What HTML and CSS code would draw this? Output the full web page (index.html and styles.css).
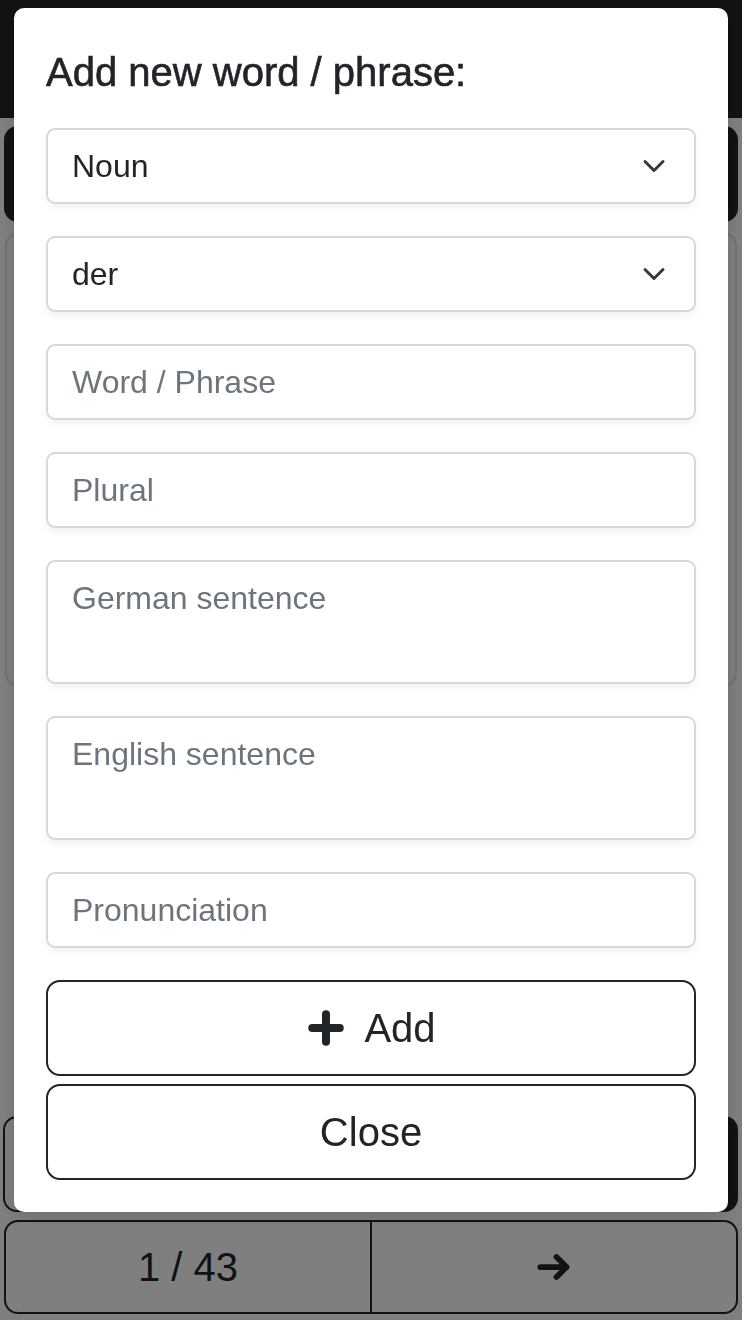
FILE: index.html
```html
<!DOCTYPE html>
<html lang="en">
<head>
<meta charset="utf-8">
<title>Add new word</title>
<link rel="stylesheet" href="styles.css">
</head>
<body>
<div class="page">
  <header class="navbar"></header>
  <main class="main">
    <button class="btn btn-dark btn-block top-btn" type="button"></button>
    <section class="card"></section>
    <div class="spacer"></div>
    <div class="action-row">
      <button class="btn btn-outline half" type="button"></button>
      <button class="btn btn-dark half" type="button"></button>
    </div>
    <nav class="pager">
      <div class="pager-cell">1 / 43</div>
      <div class="pager-cell pager-next">
        <svg width="40" height="40" viewBox="0 0 16 16" aria-hidden="true"><path d="M2.5 8h10.5M9 4l4 4-4 4" fill="none" stroke="currentColor" stroke-width="2.3" stroke-linecap="round" stroke-linejoin="round"/></svg>
      </div>
    </nav>
  </main>
</div>

<div class="backdrop"></div>

<div class="modal" role="dialog">
  <h4 class="modal-title">Add new word / phrase:</h4>
  <div class="field select-wrap">
    <select class="form-control form-select"><option>Noun</option></select>
    <svg class="chevron" width="24" height="24" viewBox="0 0 16 16" aria-hidden="true"><path d="m2 5 6 6 6-6" fill="none" stroke="#343a40" stroke-width="2" stroke-linecap="round" stroke-linejoin="round"/></svg>
  </div>
  <div class="field select-wrap">
    <select class="form-control form-select"><option>der</option></select>
    <svg class="chevron" width="24" height="24" viewBox="0 0 16 16" aria-hidden="true"><path d="m2 5 6 6 6-6" fill="none" stroke="#343a40" stroke-width="2" stroke-linecap="round" stroke-linejoin="round"/></svg>
  </div>
  <div class="field"><input class="form-control" type="text" placeholder="Word / Phrase"></div>
  <div class="field"><input class="form-control" type="text" placeholder="Plural"></div>
  <div class="field"><textarea class="form-control" rows="2" placeholder="German sentence"></textarea></div>
  <div class="field"><textarea class="form-control" rows="2" placeholder="English sentence"></textarea></div>
  <div class="field"><input class="form-control" type="text" placeholder="Pronunciation"></div>
  <button class="btn btn-outline btn-block add-btn" type="button">
    <svg width="40" height="40" viewBox="0 0 16 16" aria-hidden="true"><path d="M8 2.5v11M2.5 8h11" fill="none" stroke="currentColor" stroke-width="3.2" stroke-linecap="round"/></svg>
    <span>Add</span>
  </button>
  <button class="btn btn-outline btn-block close-btn" type="button">Close</button>
</div>
</body>
</html>
```
FILE: styles.css
```css
* { box-sizing: border-box; }
html, body { margin: 0; padding: 0; }
body {
  width: 742px;
  height: 1320px;
  overflow: hidden;
  background: #ffffff;
  font-family: "Liberation Sans", Arial, Helvetica, sans-serif;
  color: #212529;
}
.page { display: flex; flex-direction: column; height: 1320px; }
.navbar { height: 118px; background: #212529; flex: none; }
.main {
  flex: 1;
  display: flex;
  flex-direction: column;
  padding: 8px 4px 6px 4px;
}
.btn {
  font-family: inherit;
  font-size: 40px;
  line-height: 60px;
  padding: 16px 32px;
  border: 2px solid #212529;
  border-radius: 14px;
  background: transparent;
  color: #212529;
  display: flex;
  align-items: center;
  justify-content: center;
}
.btn-dark { background: #212529; color: #fff; }
.btn-block { width: 100%; }
.top-btn { height: 96px; }
.card {
  margin-top: 10px;
  margin-left: 1px;
  margin-right: 1px;
  height: 455px;
  border: 2px solid #dee2e6;
  border-radius: 14px;
}
.spacer { flex: 1; }
.action-row { display: flex; gap: 8px; margin-left: -1px; }
.half { flex: 1; height: 96px; }
.pager {
  margin-top: 8px;
  height: 94px;
  display: flex;
  border: 2px solid #212529;
  border-radius: 14px;
}
.pager-cell {
  flex: 1;
  display: flex;
  align-items: center;
  justify-content: center;
  font-size: 40px;
  color: #212529;
}
.pager-next { border-left: 2px solid #212529; }

.backdrop {
  position: fixed;
  inset: 0;
  background: rgba(0, 0, 0, 0.5);
}
.modal {
  position: fixed;
  top: 8px;
  left: 14px;
  width: 714px;
  background: #fff;
  border-radius: 10px;
  padding: 32px;
  box-shadow: 0 4px 16px rgba(0, 0, 0, 0.15);
}
.modal-title {
  margin: 0 0 32px 0;
  padding-top: 8px;
  font-size: 40px;
  line-height: 48px;
  font-weight: 500;
  -webkit-text-stroke: 0.6px #212529;
  color: #212529;
}
.field { margin-bottom: 32px; position: relative; }
.form-control {
  display: block;
  width: 100%;
  font-family: inherit;
  font-size: 32px;
  line-height: 48px;
  padding: 12px 24px;
  color: #212529;
  background: #fff;
  border: 2px solid #d5d9de;
  border-radius: 9px;
  box-shadow: 0 4px 8px rgba(0, 0, 0, 0.05);
  margin: 0;
  outline: none;
}
input.form-control { height: 76px; }
textarea.form-control { height: 124px; resize: none; }
.form-control::placeholder { color: #6c757d; opacity: 1; }
.form-select {
  -webkit-appearance: none;
  appearance: none;
  height: 76px;
}
.chevron {
  position: absolute;
  right: 30px;
  top: 26px;
  pointer-events: none;
}
.add-btn { height: 96px; gap: 18px; }
.add-btn svg { flex: none; }
.close-btn { height: 96px; margin-top: 8px; }
```
